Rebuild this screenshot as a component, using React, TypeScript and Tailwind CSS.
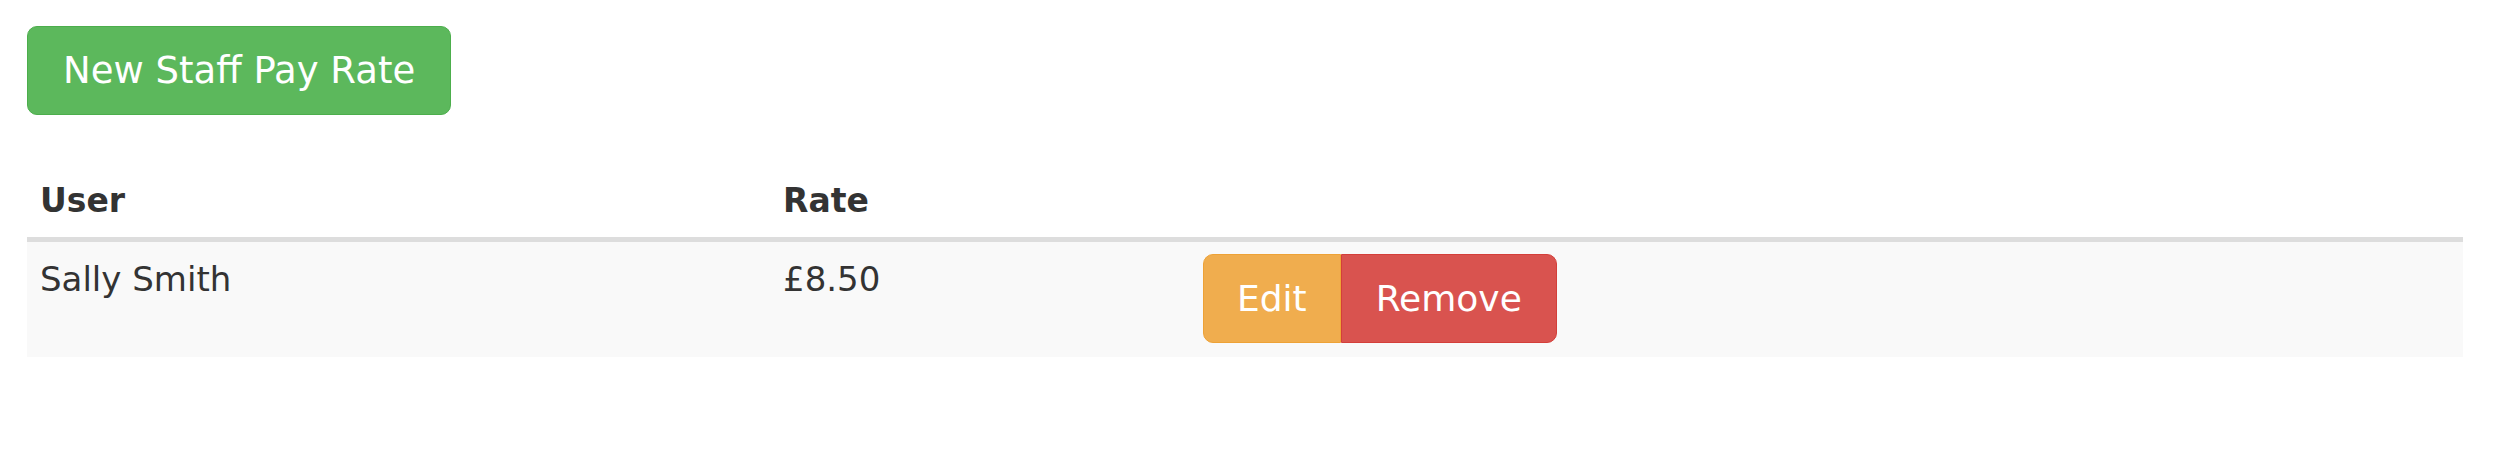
import React from 'react';

type PayRate = { id: number; user: string; rate: string };

const rates: PayRate[] = [{ id: 1, user: 'Sally Smith', rate: '£8.50' }];

const App: React.FC = () => {
  return (
    <div className="min-h-[449px] bg-white pl-[27px] pr-[37px] pt-[26px] font-['DejaVu_Sans',Verdana,sans-serif] text-[#333]">
      {/* New button */}
      <button className="h-[89px] rounded-[10px] border border-[#4cae4c] bg-[#5cb85c] px-[35px] text-[37px] leading-none text-white">
        New Staff Pay Rate
      </button>

      {/* Rates table */}
      <table className="mt-[49px] w-full border-collapse text-left">
        <thead>
          <tr className="border-b-[5px] border-[#ddd]">
            <th className="w-[743px] px-[13px] py-[13px] text-[33px] font-bold leading-[47px]">User</th>
            <th className="w-[420px] px-[13px] py-[13px] text-[33px] font-bold leading-[47px]">Rate</th>
            <th className="px-[13px] py-[13px]"></th>
          </tr>
        </thead>
        <tbody>
          {rates.map((r) => (
            <tr key={r.id} className="bg-[#f9f9f9]">
              <td className="px-[13px] pt-[14px] pb-[12px] align-top text-[34px] leading-[47px]">{r.user}</td>
              <td className="px-[13px] pt-[14px] pb-[12px] align-top text-[34px] leading-[47px]">{r.rate}</td>
              <td className="px-[13px] pt-[12px] pb-[14px] align-top">
                <div className="flex">
                  <button className="h-[89px] rounded-l-[10px] border border-[#eea236] bg-[#f0ad4e] px-[33px] text-[36px] leading-none text-white">
                    Edit
                  </button>
                  <button className="h-[89px] rounded-r-[10px] border border-[#d43f3a] bg-[#d9534f] px-[34px] text-[36px] leading-none text-white">
                    Remove
                  </button>
                </div>
              </td>
            </tr>
          ))}
        </tbody>
      </table>
    </div>
  );
};

export default App;
